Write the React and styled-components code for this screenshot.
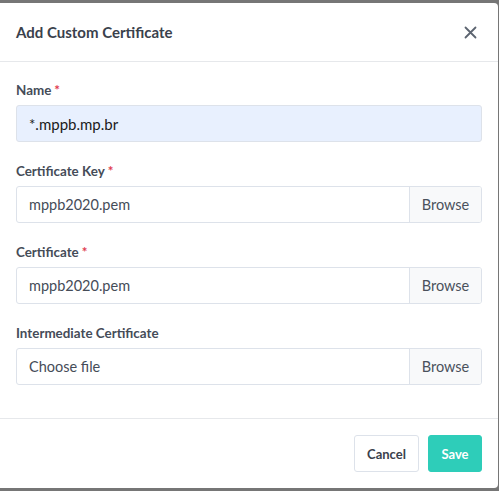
import React from "react";
import styled, { createGlobalStyle } from "styled-components";

const GlobalStyle = createGlobalStyle`
  html, body {
    margin: 0;
    padding: 0;
    background: #767676;
  }
  body {
    font-family: Lato, "Open Sans", sans-serif;
  }
`;

const Backdrop = styled.div`
  width: 499px;
  height: 491px;
  padding: 3px 1px 3px 0;
  box-sizing: border-box;
  background: #767676;
`;

const Modal = styled.div`
  height: 100%;
  background: #fff;
  border-radius: 0 4px 4px 0;
  display: flex;
  flex-direction: column;
  overflow: hidden;
`;

const Header = styled.div`
  display: flex;
  align-items: center;
  justify-content: space-between;
  height: 58px;
  padding: 0 16px;
  border-bottom: 1px solid #e6e8eb;
`;

const Title = styled.h5`
  margin: 0;
  font-size: 15px;
  font-weight: 700;
  color: #3a414c;
`;

const Close = styled.button`
  border: none;
  background: none;
  padding: 0;
  margin-right: 5px;
  width: 13px;
  height: 13px;
  display: flex;
  cursor: pointer;
`;

const Body = styled.div`
  padding: 19px 16px 12px;
  flex: 1;
`;

const Group = styled.div`
  margin-bottom: 20px;
`;

const Label = styled.label`
  display: block;
  height: 19px;
  margin-bottom: 5px;
  font-size: 13.4px;
  font-weight: 700;
  color: #454c58;
  line-height: 18px;

  span {
    color: #e03b4e;
    margin-left: 3px;
  }
`;

const TextInput = styled.div`
  height: 37px;
  box-sizing: border-box;
  border: 1px solid #dde2ea;
  border-radius: 3px;
  background: ${(p) => (p.$filled ? "#e8f0fe" : "#fff")};
  padding: 0 12px;
  display: flex;
  align-items: center;
  font-size: 15px;
  color: ${(p) => (p.$filled ? "#1a1a1a" : "#454c58")};
`;

const FileRow = styled.div`
  display: flex;
  height: 37px;
  box-sizing: border-box;
  border: 1px solid #dde2ea;
  border-radius: 3px;
  overflow: hidden;
`;

const FileName = styled.div`
  flex: 1;
  display: flex;
  align-items: center;
  padding: 0 12px;
  font-size: 14.5px;
  color: #454c58;
`;

const Browse = styled.div`
  width: 71px;
  border-left: 1px solid #dde2ea;
  background: #f8f9fa;
  display: flex;
  align-items: center;
  justify-content: center;
  font-size: 14.5px;
  color: #4a515c;
`;

const Footer = styled.div`
  display: flex;
  justify-content: flex-end;
  gap: 9px;
  padding: 16px;
  border-top: 1px solid #e6e8eb;
`;

const Button = styled.button`
  height: 37px;
  box-sizing: border-box;
  border-radius: 3px;
  font-family: inherit;
  font-size: 13px;
  font-weight: 700;
  padding: 0 12px;
  border: 1px solid ${(p) => (p.$primary ? "#2ecdb9" : "#dde2ea")};
  background: ${(p) => (p.$primary ? "#2ecdb9" : "#fff")};
  color: ${(p) => (p.$primary ? "#fff" : "#3a414c")};
  min-width: ${(p) => (p.$primary ? "54px" : "65px")};
`;

function FileField({ label, required, value }) {
  return (
    <Group>
      <Label>
        {label}
        {required && <span>*</span>}
      </Label>
      <FileRow>
        <FileName>{value}</FileName>
        <Browse>Browse</Browse>
      </FileRow>
    </Group>
  );
}

export default function App() {
  return (
    <>
      <GlobalStyle />
      <Backdrop>
        <Modal>
          <Header>
            <Title>Add Custom Certificate</Title>
            <Close aria-label="Close">
              <svg width="13" height="13" viewBox="0 0 13 13">
                <path d="M1.5 1.5L11.5 11.5M11.5 1.5L1.5 11.5" stroke="#5c6470" strokeWidth="1.8" strokeLinecap="round" />
              </svg>
            </Close>
          </Header>
          <Body>
            <Group>
              <Label>
                Name<span>*</span>
              </Label>
              <TextInput $filled>*.mppb.mp.br</TextInput>
            </Group>
            <FileField label="Certificate Key" required value="mppb2020.pem" />
            <FileField label="Certificate" required value="mppb2020.pem" />
            <FileField label="Intermediate Certificate" value="Choose file" />
          </Body>
          <Footer>
            <Button>Cancel</Button>
            <Button $primary>Save</Button>
          </Footer>
        </Modal>
      </Backdrop>
    </>
  );
}
